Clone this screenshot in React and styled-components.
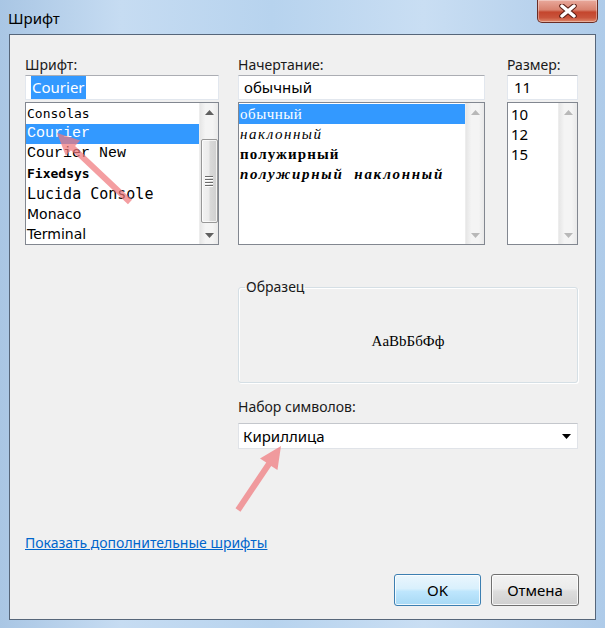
import React from "react";
import styled, { createGlobalStyle } from "styled-components";

const GlobalStyle = createGlobalStyle`
  html, body {
    margin: 0;
    padding: 0;
    background: #b9d3ec;
  }
  * {
    box-sizing: border-box;
  }
`;

const UI_FONT = `"Noto Sans", "Open Sans", sans-serif`;

const fontList = [
  { name: "Consolas", family: `"DejaVu Sans Mono", monospace`, size: 13 },
  { name: "Courier", family: `"Liberation Mono", monospace`, size: 15, selected: true },
  { name: "Courier New", family: `"Liberation Mono", monospace`, size: 15 },
  { name: "Fixedsys", family: `"DejaVu Sans Mono", monospace`, size: 13, weight: 700 },
  { name: "Lucida Console", family: `"DejaVu Sans Mono", monospace`, size: 15 },
  { name: "Monaco", family: `"DejaVu Sans", sans-serif`, size: 14 },
  { name: "Terminal", family: `"DejaVu Sans", sans-serif`, size: 14 },
];

const styleList = [
  { name: "обычный", size: 15, selected: true, spacing: 0.5 },
  { name: "наклонный", size: 15, italic: true, spacing: 1.5 },
  { name: "полужирный", size: 15, weight: 700, spacing: 1.1 },
  { name: "полужирный  наклонный", size: 15, weight: 700, italic: true, spacing: 1.7 },
];

const sizeList = ["10", "12", "15"];

// arrow polygon from tail to tip
const arrowPoints = (tx, ty, hx, hy, shaft = 6, headLen = 22, headW = 21) => {
  const dx = hx - tx;
  const dy = hy - ty;
  const len = Math.sqrt(dx * dx + dy * dy);
  const ux = dx / len;
  const uy = dy / len;
  const px = -uy;
  const py = ux;
  const bx = hx - ux * headLen;
  const by = hy - uy * headLen;
  const pts = [
    [tx + (px * shaft) / 2, ty + (py * shaft) / 2],
    [bx + (px * shaft) / 2, by + (py * shaft) / 2],
    [bx + (px * headW) / 2, by + (py * headW) / 2],
    [hx, hy],
    [bx - (px * headW) / 2, by - (py * headW) / 2],
    [bx - (px * shaft) / 2, by - (py * shaft) / 2],
    [tx - (px * shaft) / 2, ty - (py * shaft) / 2],
  ];
  return pts.map((p) => p.join(",")).join(" ");
};

const Scrollbar = ({ disabled, thumbTop, thumbHeight }) => (
  <ScrollTrack>
    <ArrowBtn>
      <svg width="9" height="5" viewBox="0 0 9 5">
        <path d="M0 5 L4.5 0 L9 5 Z" fill={disabled ? "#b8b8b8" : "#606060"} />
      </svg>
    </ArrowBtn>
    <TrackBody>
      {!disabled && (
        <Thumb style={{ marginTop: thumbTop, height: thumbHeight }}>
          <Grip />
          <Grip />
          <Grip />
          <Grip />
        </Thumb>
      )}
    </TrackBody>
    <ArrowBtn>
      <svg width="9" height="5" viewBox="0 0 9 5">
        <path d="M0 0 L4.5 5 L9 0 Z" fill={disabled ? "#b8b8b8" : "#606060"} />
      </svg>
    </ArrowBtn>
  </ScrollTrack>
);

const App = () => {
  return (
    <>
      <GlobalStyle />
      <Frame>
        <TitleBar>
          <TitleText>Шрифт</TitleText>
          <CloseButton>
            <svg width="20" height="14" viewBox="0 0 20 14">
              <path
                d="M4 2 L16 12 M16 2 L4 12"
                stroke="#5a1e14"
                strokeWidth="5.5"
                strokeLinecap="round"
              />
              <path
                d="M4 2 L16 12 M16 2 L4 12"
                stroke="#ffffff"
                strokeWidth="3.5"
                strokeLinecap="round"
              />
            </svg>
          </CloseButton>
        </TitleBar>

        <Client>
          <MainGrid>
            <FieldLabel>Шрифт:</FieldLabel>
            <FieldLabel>Начертание:</FieldLabel>
            <FieldLabel $end>Размер:</FieldLabel>

            <TextBox>
              <Selected>Courier</Selected>
            </TextBox>
            <TextBox>обычный</TextBox>
            <TextBox $pad={6} $end>
              11
            </TextBox>

            <ListBox>
              <ListItems>
                {fontList.map((f) => (
                  <Row
                    key={f.name}
                    $family={f.family}
                    $size={f.size}
                    $weight={f.weight}
                    $selected={f.selected}
                  >
                    {f.name}
                  </Row>
                ))}
              </ListItems>
              <Scrollbar thumbTop={18} thumbHeight={84} />
            </ListBox>

            <ListBox>
              <ListItems>
                {styleList.map((s) => (
                  <Row
                    key={s.name}
                    $family={`"Liberation Serif", serif`}
                    $size={s.size}
                    $weight={s.weight}
                    $italic={s.italic}
                    $spacing={s.spacing}
                    $selected={s.selected}
                    $indent={1}
                  >
                    {s.name}
                  </Row>
                ))}
              </ListItems>
              <Scrollbar disabled />
            </ListBox>

            <ListBox $end>
              <ListItems>
                {sizeList.map((s) => (
                  <Row key={s} $family={UI_FONT} $size={15} $indent={3}>
                    {s}
                  </Row>
                ))}
              </ListItems>
              <Scrollbar disabled />
            </ListBox>

            <SampleGroup>
              <Legend>Образец</Legend>
              <SampleText>AaBbБбФф</SampleText>
            </SampleGroup>

            <CharsetBlock>
              <FieldLabel>Набор символов:</FieldLabel>
              <ComboBox>
                <span>Кириллица</span>
                <svg width="9" height="5" viewBox="0 0 9 5">
                  <path d="M0 0 L4.5 5 L9 0 Z" fill="#000" />
                </svg>
              </ComboBox>
            </CharsetBlock>
          </MainGrid>

          <Footer>
            <MoreLink href="#">Показать дополнительные шрифты</MoreLink>
            <ButtonRow>
              <DialogButton $default>OK</DialogButton>
              <DialogButton>Отмена</DialogButton>
            </ButtonRow>
          </Footer>
        </Client>

        <Overlay width="605" height="628" viewBox="0 0 605 628">
          <polygon
            points={arrowPoints(130, 202, 57, 133)}
            fill="rgba(240, 120, 125, 0.72)"
          />
          <polygon
            points={arrowPoints(238, 510, 281, 446)}
            fill="rgba(240, 120, 125, 0.72)"
          />
        </Overlay>
      </Frame>
    </>
  );
};

const Frame = styled.div`
  position: relative;
  width: 605px;
  height: 628px;
  display: flex;
  flex-direction: column;
  background: linear-gradient(
    90deg,
    #a9c6e4 0%,
    #c6dcf2 20%,
    #b7d3ee 45%,
    #c9def3 70%,
    #aecbe9 100%
  );
  overflow: hidden;
`;

const TitleBar = styled.div`
  height: 34px;
  display: flex;
  align-items: flex-start;
  padding: 0 7px 0 8px;
  flex-shrink: 0;
`;

const TitleText = styled.div`
  font-family: ${UI_FONT};
  font-size: 15px;
  color: #000;
  line-height: 20px;
  padding-top: 8px;
`;

const CloseButton = styled.div`
  margin-left: auto;
  width: 61px;
  height: 23px;
  border: 1px solid #6a2d25;
  border-top: none;
  border-radius: 0 0 5px 5px;
  background: linear-gradient(
    180deg,
    #e9a99c 0%,
    #d8826f 45%,
    #c4452d 55%,
    #c9543c 80%,
    #e08a6c 100%
  );
  box-shadow: inset 0 0 0 1px rgba(255, 255, 255, 0.35);
  display: flex;
  align-items: center;
  justify-content: center;
`;

const Client = styled.div`
  flex: 1;
  margin: 0 9px 8px 9px;
  background: #f0f0f0;
  border: 1px solid #56667a;
  padding: 20px 17px 13px 15px;
  display: flex;
  flex-direction: column;
`;

const MainGrid = styled.div`
  display: grid;
  grid-template-columns: 194px 247px 1fr;
  grid-template-rows: 20px 25px 143px auto auto;
  column-gap: 19px;
`;

const FieldLabel = styled.div`
  font-family: ${UI_FONT};
  font-size: 14px;
  line-height: 20px;
  color: #1a1a1a;
  ${(p) => p.$end && "justify-self: end; width: 71px;"}
`;

const TextBox = styled.div`
  height: 25px;
  background: #fff;
  border: 1px solid #e2e7ee;
  border-top-color: #abadb3;
  font-family: ${UI_FONT};
  font-size: 15px;
  line-height: 23px;
  padding-left: ${(p) => p.$pad || 5}px;
  color: #000;
  white-space: nowrap;
  ${(p) => p.$end && "justify-self: end; width: 71px;"}
`;

const Selected = styled.span`
  background: #3399ff;
  color: #fff;
  padding: 1px 1px 2px 1px;
`;

const ListBox = styled.div`
  margin-top: 2px;
  height: 143px;
  background: #fff;
  border: 1px solid #828790;
  display: flex;
  overflow: hidden;
  ${(p) => p.$end && "justify-self: end; width: 71px;"}
`;

const ListItems = styled.div`
  flex: 1;
  padding-top: 1px;
  min-width: 0;
`;

const Row = styled.div`
  height: 20px;
  line-height: 20px;
  font-family: ${(p) => p.$family};
  font-size: ${(p) => p.$size}px;
  font-weight: ${(p) => p.$weight || 400};
  font-style: ${(p) => (p.$italic ? "italic" : "normal")};
  letter-spacing: ${(p) => p.$spacing || 0}px;
  padding-left: ${(p) => (p.$indent != null ? p.$indent : 1)}px;
  white-space: pre;
  background: ${(p) => (p.$selected ? "#3399ff" : "transparent")};
  color: ${(p) => (p.$selected ? "#fff" : "#000")};
`;

const ScrollTrack = styled.div`
  width: 19px;
  display: flex;
  flex-direction: column;
  background: linear-gradient(90deg, #e6e6e6 0%, #f4f4f4 30%, #f4f4f4 70%, #e9e9e9 100%);
  border-left: 1px solid #ededed;
`;

const ArrowBtn = styled.div`
  height: 18px;
  display: flex;
  align-items: center;
  justify-content: center;
`;

const TrackBody = styled.div`
  flex: 1;
  display: flex;
  flex-direction: column;
  align-items: center;
`;

const Thumb = styled.div`
  width: 17px;
  border: 1px solid #979797;
  border-radius: 2px;
  background: linear-gradient(90deg, #f2f2f2 0%, #ebebeb 45%, #d9d9d9 55%, #cfcfcf 100%);
  box-shadow: inset 0 0 0 1px rgba(255, 255, 255, 0.7);
  display: flex;
  flex-direction: column;
  align-items: center;
  justify-content: center;
  gap: 2px;
`;

const Grip = styled.div`
  width: 8px;
  height: 1px;
  background: #6a6a6a;
  box-shadow: 0 1px 0 #fff;
`;

const SampleGroup = styled.fieldset`
  grid-column: 2 / 4;
  margin: 34px 0 0 0;
  padding: 0;
  min-width: 0;
  height: 106px;
  border: 1px solid #d5dfe5;
  border-radius: 3px;
  box-shadow: inset 1px 1px 0 #fff, 1px 1px 0 #fff;
  display: flex;
  align-items: center;
  justify-content: center;
`;

const Legend = styled.legend`
  font-family: ${UI_FONT};
  font-size: 14px;
  line-height: 20px;
  color: #1a1a1a;
  padding: 0 1px;
  margin-left: 6px;
`;

const SampleText = styled.div`
  font-family: "Liberation Serif", serif;
  font-size: 15px;
  color: #000;
  margin-top: 4px;
`;

const CharsetBlock = styled.div`
  grid-column: 2 / 4;
  padding-top: 14px;
  display: flex;
  flex-direction: column;
  gap: 6px;
`;

const ComboBox = styled.div`
  height: 26px;
  background: #fff;
  border: 1px solid #e0e3e8;
  border-top-color: #c4c7cc;
  display: flex;
  align-items: center;
  justify-content: space-between;
  padding: 0 6px 0 4px;
  font-family: ${UI_FONT};
  font-size: 15px;
  color: #000;
`;

const Footer = styled.div`
  margin-top: auto;
  display: flex;
  flex-direction: column;
`;

const MoreLink = styled.a`
  align-self: flex-start;
  font-family: ${UI_FONT};
  font-size: 14px;
  line-height: 20px;
  color: #0066cc;
  text-decoration: underline;
  margin-bottom: 21px;
`;

const ButtonRow = styled.div`
  display: flex;
  justify-content: flex-end;
  gap: 10px;
  margin-right: -1px;
`;

const DialogButton = styled.div`
  width: ${(p) => (p.$default ? 87 : 88)}px;
  height: 32px;
  border-radius: 3px;
  border: 1px solid ${(p) => (p.$default ? "#3c7fb1" : "#707070")};
  background: ${(p) =>
    p.$default
      ? "linear-gradient(180deg, #eaf6fd 0%, #d9f0fc 45%, #bee6fd 55%, #a7d9f5 100%)"
      : "linear-gradient(180deg, #f2f2f2 0%, #ebebeb 45%, #dddddd 55%, #cfcfcf 100%)"};
  box-shadow: inset 0 0 0 1px rgba(255, 255, 255, 0.8);
  display: flex;
  align-items: center;
  justify-content: center;
  font-family: ${UI_FONT};
  font-size: 15px;
  color: #000;
`;

const Overlay = styled.svg`
  position: absolute;
  left: 0;
  top: 0;
  pointer-events: none;
  filter: blur(0.6px);
`;

export default App;
